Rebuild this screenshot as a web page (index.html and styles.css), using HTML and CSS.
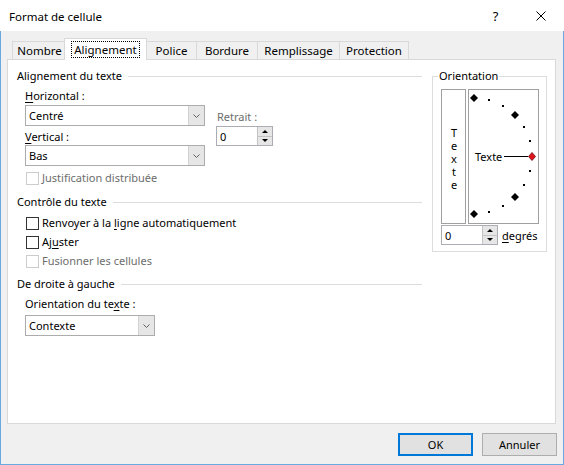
FILE: index.html
```html
<!DOCTYPE html>
<html lang="fr">
<head>
<meta charset="utf-8">
<title>Format de cellule</title>
<link rel="stylesheet" href="styles.css">
</head>
<body>
<div class="window">
  <div class="titlebar">
    <span class="title">Format de cellule</span>
    <span class="tbtn help">?</span>
    <span class="tbtn close"><svg width="10" height="10" viewBox="0 0 10 10"><path d="M0.5 0.5 L9.5 9.5 M9.5 0.5 L0.5 9.5" stroke="#000" stroke-width="1" fill="none"/></svg></span>
  </div>
  <div class="body">
    <div class="tabs">
      <div class="tab t-nombre">Nombre</div>
      <div class="tab sel t-align"><span class="focus">Alignement</span></div>
      <div class="tab t-police">Police</div>
      <div class="tab t-bordure">Bordure</div>
      <div class="tab t-remp">Remplissage</div>
      <div class="tab t-prot">Protection</div>
    </div>
    <div class="panel">
      <div class="leftcol">
        <div class="gtitle"><span>Alignement du texte</span></div>
        <div class="halign">
          <div class="combos">
            <div class="lbl"><u>H</u>orizontal :</div>
            <div class="combo wide mt1"><span class="cval">Centré</span><span class="dd"><svg width="7" height="4" viewBox="0 0 7 4"><path d="M0.5 0.5 L3.5 3.5 L6.5 0.5" stroke="#606060" fill="none"/></svg></span></div>
            <div class="lbl mt3"><u>V</u>ertical :</div>
            <div class="combo wide"><span class="cval">Bas</span><span class="dd"><svg width="7" height="4" viewBox="0 0 7 4"><path d="M0.5 0.5 L3.5 3.5 L6.5 0.5" stroke="#606060" fill="none"/></svg></span></div>
          </div>
          <div class="retrait">
            <div class="lbl dis">Retrait :</div>
            <div class="spin sp-retrait"><span class="cval">0</span><span class="spb"><span class="up"></span><span class="down"></span></span></div>
          </div>
        </div>
        <div class="chk dis mt4"><span class="box"></span><span class="ctext">Justification distribuée</span></div>
        <div class="gtitle mt8"><span>Contrôle du texte</span></div>
        <div class="chk mt5"><span class="box"></span><span class="ctext">Renvoyer à la <u>l</u>igne automatiquement</span></div>
        <div class="chk mt3"><span class="box"></span><span class="ctext">Aj<u>u</u>ster</span></div>
        <div class="chk dis mt3"><span class="box"></span><span class="ctext">Fusionner les cellules</span></div>
        <div class="gtitle mt7"><span>De droite à gauche</span></div>
        <div class="lbl ind mt4">Orientation du te<u>x</u>te :</div>
        <div class="combo narrow ind mt3"><span class="cval">Contexte</span><span class="dd"><svg width="7" height="4" viewBox="0 0 7 4"><path d="M0.5 0.5 L3.5 3.5 L6.5 0.5" stroke="#606060" fill="none"/></svg></span></div>
      </div>
      <fieldset class="orient">
        <legend>Orientation</legend>
        <div class="orow">
          <div class="vbox"><span class="vtext">Texte</span></div>
          <div class="dial">
            <svg width="69" height="133" viewBox="0 0 69 133">
              <g fill="#000">
                <polygon points="5,4 9,8 5,12 1,8"/>
                <rect x="19" y="9" width="2" height="2"/>
                <rect x="33" y="15" width="2" height="2"/>
                <polygon points="46,21 50,25 46,29 42,25"/>
                <rect x="54" y="36" width="2" height="2"/>
                <rect x="60" y="50" width="2" height="2"/>
                <rect x="60" y="80" width="2" height="2"/>
                <rect x="54" y="94" width="2" height="2"/>
                <polygon points="46,103 50,107 46,111 42,107"/>
                <rect x="33" y="115" width="2" height="2"/>
                <rect x="19" y="121" width="2" height="2"/>
                <polygon points="5,120 9,124 5,128 1,124"/>
              </g>
              <line x1="35" y1="66.5" x2="59" y2="66.5" stroke="#000" stroke-width="1"/>
              <polygon points="63,62.5 66.5,66.5 63,70.5 59.5,66.5" fill="#e0141e" stroke="#6a0a0a" stroke-width="0.8"/>
              <text x="6" y="70.5" class="dtext">Texte</text>
            </svg>
          </div>
        </div>
        <div class="degrow">
          <div class="spin sp-deg"><span class="cval">0</span><span class="spb"><span class="up"></span><span class="down"></span></span></div>
          <span class="deglbl"><u>d</u>egrés</span>
        </div>
      </fieldset>
    </div>
    <div class="buttons">
      <div class="btn ok">OK</div>
      <div class="btn">Annuler</div>
    </div>
  </div>
</div>
</body>
</html>
```
FILE: styles.css
```css
* { box-sizing: border-box; }
html, body { margin: 0; padding: 0; }
body {
  width: 564px;
  height: 465px;
  overflow: hidden;
  font-family: "Noto Sans", "Segoe UI", sans-serif;
  font-size: 11px;
  color: #000;
  background: #fff;
}
u { text-decoration: underline; text-underline-offset: 2px; }
.window { width: 564px; height: 465px; display: flex; flex-direction: column; }
.titlebar {
  height: 31px;
  background: #fff;
  display: flex;
  align-items: center;
  padding-left: 9px;
}
.title { flex: 1; padding-top: 1px; font-size: 11.5px; }
.tbtn { width: 45px; height: 31px; display: flex; align-items: center; justify-content: center; }
.help { font-size: 13px; }
.close { margin-right: 1px; }
.body {
  flex: 1;
  background: #f0f0f0;
  border: 1px solid #6aa9e0;
  border-top: none;
  display: flex;
  flex-direction: column;
}
.tabs {
  display: flex;
  align-items: flex-end;
  height: 21px;
  margin-top: 7px;
  padding-left: 11px;
  position: relative;
  z-index: 2;
}
.tab {
  height: 18px;
  border: 1px solid #d9d9d9;
  border-bottom: none;
  margin-right: -1px;
  display: flex;
  align-items: center;
  justify-content: center;
  background: #f0f0f0;
  line-height: 16px;
  font-size: 11.5px;
}
.tab.sel {
  height: 22px;
  margin-bottom: -1px;
  margin-left: -2px;
  background: #fff;
  position: relative;
  z-index: 3;
  padding-bottom: 1px;
}
.focus { outline: 1px dotted #000; outline-offset: 0; padding: 0 2px; line-height: 15px; }
.t-nombre { width: 55px; }
.t-align { width: 83px; }
.t-police { width: 51px; }
.t-bordure { width: 62px; }
.t-remp { width: 83px; }
.t-prot { width: 70px; }
.panel {
  margin-left: 6px;
  width: 549px;
  height: 365px;
  background: #fff;
  border: 1px solid #d9d9d9;
  display: flex;
  align-items: flex-start;
  padding: 8px 0 0 9px;
  position: relative;
  z-index: 1;
}
.leftcol { width: 405px; display: flex; flex-direction: column; }
.gtitle { display: flex; align-items: center; height: 16px; line-height: 16px; white-space: nowrap; }
.gtitle::after { content: ""; flex: 1; height: 1px; background: #dcdcdc; margin-left: 6px; }
.lbl { height: 16px; line-height: 16px; white-space: nowrap; }
.ind { margin-left: 8px; }
.dis { color: #6d6d6d; }
.mt1 { margin-top: 1px; }
.mt3 { margin-top: 3px; }
.mt4 { margin-top: 4px; }
.mt5 { margin-top: 5px; }
.mt7 { margin-top: 7px; }
.mt8 { margin-top: 8px; }
.halign { display: flex; margin-left: 8px; margin-top: 4px; }
.combos { width: 180px; display: flex; flex-direction: column; }
.combo {
  height: 21px;
  border: 1px solid #acacac;
  background: #fff;
  display: flex;
  align-items: stretch;
}
.combo.wide { width: 180px; }
.combo.narrow { width: 130px; }
.cval { flex: 1; padding-left: 3px; line-height: 19px; }
.dd {
  width: 16px;
  background: #e6e6e6;
  border-left: 1px solid #d2d2d2;
  display: flex;
  align-items: center;
  justify-content: center;
}
.retrait { margin-left: 11px; padding-top: 21px; display: flex; flex-direction: column; }
.retrait .lbl { padding-left: 1px; margin-bottom: 1px; }
.spin {
  height: 20px;
  border: 1px solid #abadb3;
  background: #fff;
  display: flex;
  align-items: stretch;
}
.sp-retrait { width: 57px; }
.sp-deg { width: 57px; }
.spb {
  width: 15px;
  display: flex;
  flex-direction: column;
  border-left: 1px solid #c4c4c4;
  background: #e6e6e6;
}
.spb .up, .spb .down { flex: 1; display: flex; align-items: center; justify-content: center; }
.spb .up { border-bottom: 1px solid #c4c4c4; }
.spb .up::before { content: ""; border-left: 3px solid transparent; border-right: 3px solid transparent; border-bottom: 3px solid #000; }
.spb .down::before { content: ""; border-left: 3px solid transparent; border-right: 3px solid transparent; border-top: 3px solid #000; }
.chk { display: flex; align-items: center; height: 16px; margin-left: 9px; white-space: nowrap; }
.chk .box { width: 13px; height: 13px; border: 1px solid #333; background: #fff; margin-right: 3px; flex: none; }
.chk.dis .box { border-color: #cccccc; }
.ctext { line-height: 16px; }
.orient {
  margin: 0 0 0 10px;
  padding: 0 7px 0 8px;
  width: 115px;
  height: 184px;
  border: 1px solid #dcdcdc;
  min-width: 0;
}
.orient legend { padding: 0 1px; margin-left: -3px; line-height: 16px; height: 16px; }
.orow { display: flex; gap: 2px; margin-top: 5px; }
.vbox {
  width: 25px;
  height: 135px;
  border: 1px solid #a0a0a0;
  display: flex;
  align-items: center;
  justify-content: center;
  padding-top: 2px;
}
.vtext {
  writing-mode: vertical-lr;
  text-orientation: upright;
  letter-spacing: -2px;
  line-height: 16px;
}
.dial { width: 71px; height: 135px; border: 1px solid #a0a0a0; }
.dial svg { display: block; }
.dtext { font-family: "Noto Sans", "Segoe UI", sans-serif; font-size: 11px; fill: #000; }
.degrow { display: flex; align-items: flex-start; margin-top: 1px; }
.deglbl { margin-left: 4px; padding-top: 3px; line-height: 16px; }
.buttons { display: flex; justify-content: flex-end; gap: 9px; margin-top: 9px; padding-right: 6px; }
.btn {
  width: 75px;
  height: 23px;
  background: #e1e1e1;
  border: 1px solid #adadad;
  display: flex;
  align-items: center;
  justify-content: center;
}
.btn.ok { border: 2px solid #0078d7; }
```
